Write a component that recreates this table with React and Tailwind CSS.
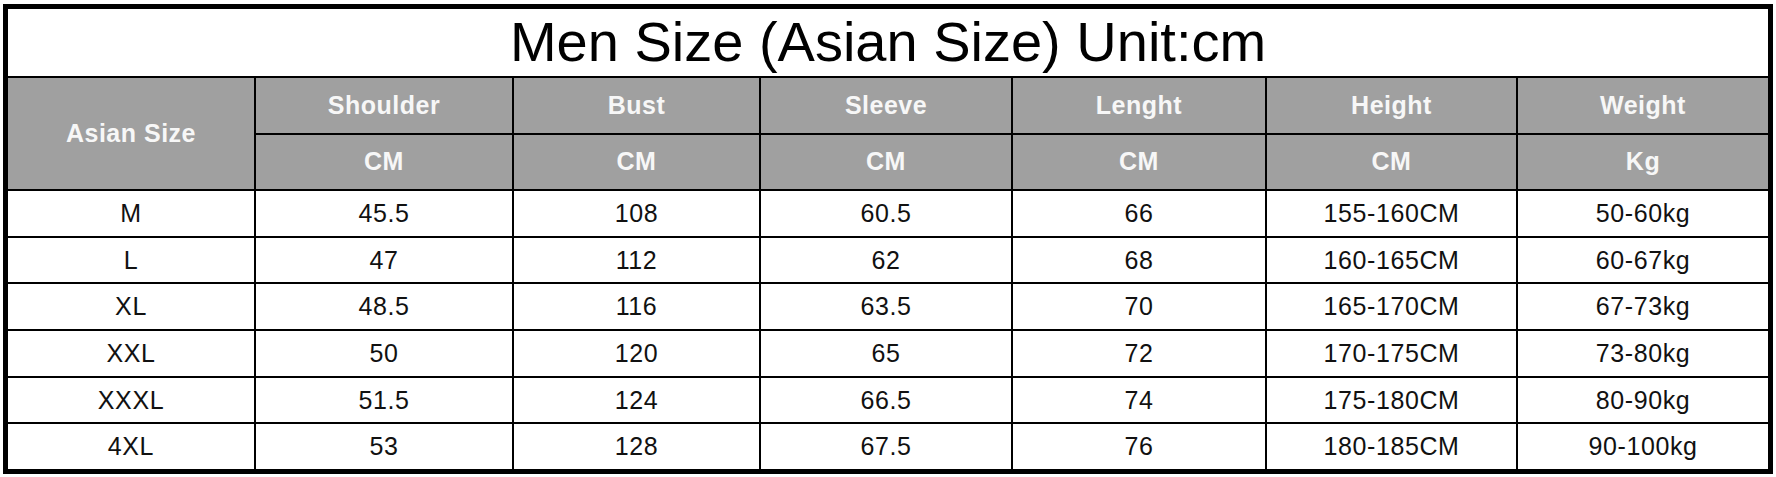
const columns = [
  { name: "Shoulder", unit: "CM" },
  { name: "Bust", unit: "CM" },
  { name: "Sleeve", unit: "CM" },
  { name: "Lenght", unit: "CM" },
  { name: "Height", unit: "CM" },
  { name: "Weight", unit: "Kg" },
];

const rows = [
  ["M", "45.5", "108", "60.5", "66", "155-160CM", "50-60kg"],
  ["L", "47", "112", "62", "68", "160-165CM", "60-67kg"],
  ["XL", "48.5", "116", "63.5", "70", "165-170CM", "67-73kg"],
  ["XXL", "50", "120", "65", "72", "170-175CM", "73-80kg"],
  ["XXXL", "51.5", "124", "66.5", "74", "175-180CM", "80-90kg"],
  ["4XL", "53", "128", "67.5", "76", "180-185CM", "90-100kg"],
];

const rowHeights = ["h-[47px]", "h-[46px]", "h-[47px]", "h-[47px]", "h-[46px]", "h-[46px]"];

function App() {
  return (
    <div className="w-[1776px] h-[477px] bg-white pt-[4px] pl-[3px] font-['Liberation_Sans',Arial,sans-serif]">
      <div className="w-[1770px] h-[470px] border-[5px] border-black bg-white">
        <table className="w-full h-full table-fixed border-collapse border-hidden">
          <colgroup>
            <col className="w-[247px]" />
            <col className="w-[258px]" />
            <col className="w-[247px]" />
            <col className="w-[252px]" />
            <col className="w-[254px]" />
            <col className="w-[251px]" />
            <col className="w-[251px]" />
          </colgroup>
          <tbody>
            {/* Title */}
            <tr className="h-[68px]">
              <td colSpan={7} className="border-2 border-black text-center text-[56px] leading-none text-black pb-[2px]">
                Men Size (Asian Size) Unit:cm
              </td>
            </tr>

            {/* Header */}
            <tr className="h-[57px] bg-[#a0a0a0] text-[#f7f7f7] font-bold text-[25px] tracking-[0.5px]">
              <td rowSpan={2} className="border-2 border-black text-center">Asian Size</td>
              {columns.map((c) => (
                <td key={c.name} className="border-2 border-black text-center">{c.name}</td>
              ))}
            </tr>
            <tr className="h-[56px] bg-[#a0a0a0] text-[#f7f7f7] font-bold text-[25px] tracking-[0.5px]">
              {columns.map((c) => (
                <td key={c.name} className="border-2 border-black text-center">{c.unit}</td>
              ))}
            </tr>

            {/* Data */}
            {rows.map((r, i) => (
              <tr key={r[0]} className={rowHeights[i] + " text-[25px] tracking-[0.6px] text-[#111]"}>
                {r.map((v, j) => (
                  <td key={j} className="border-2 border-black text-center leading-none">{v}</td>
                ))}
              </tr>
            ))}
          </tbody>
        </table>
      </div>
    </div>
  );
}

export default App;
